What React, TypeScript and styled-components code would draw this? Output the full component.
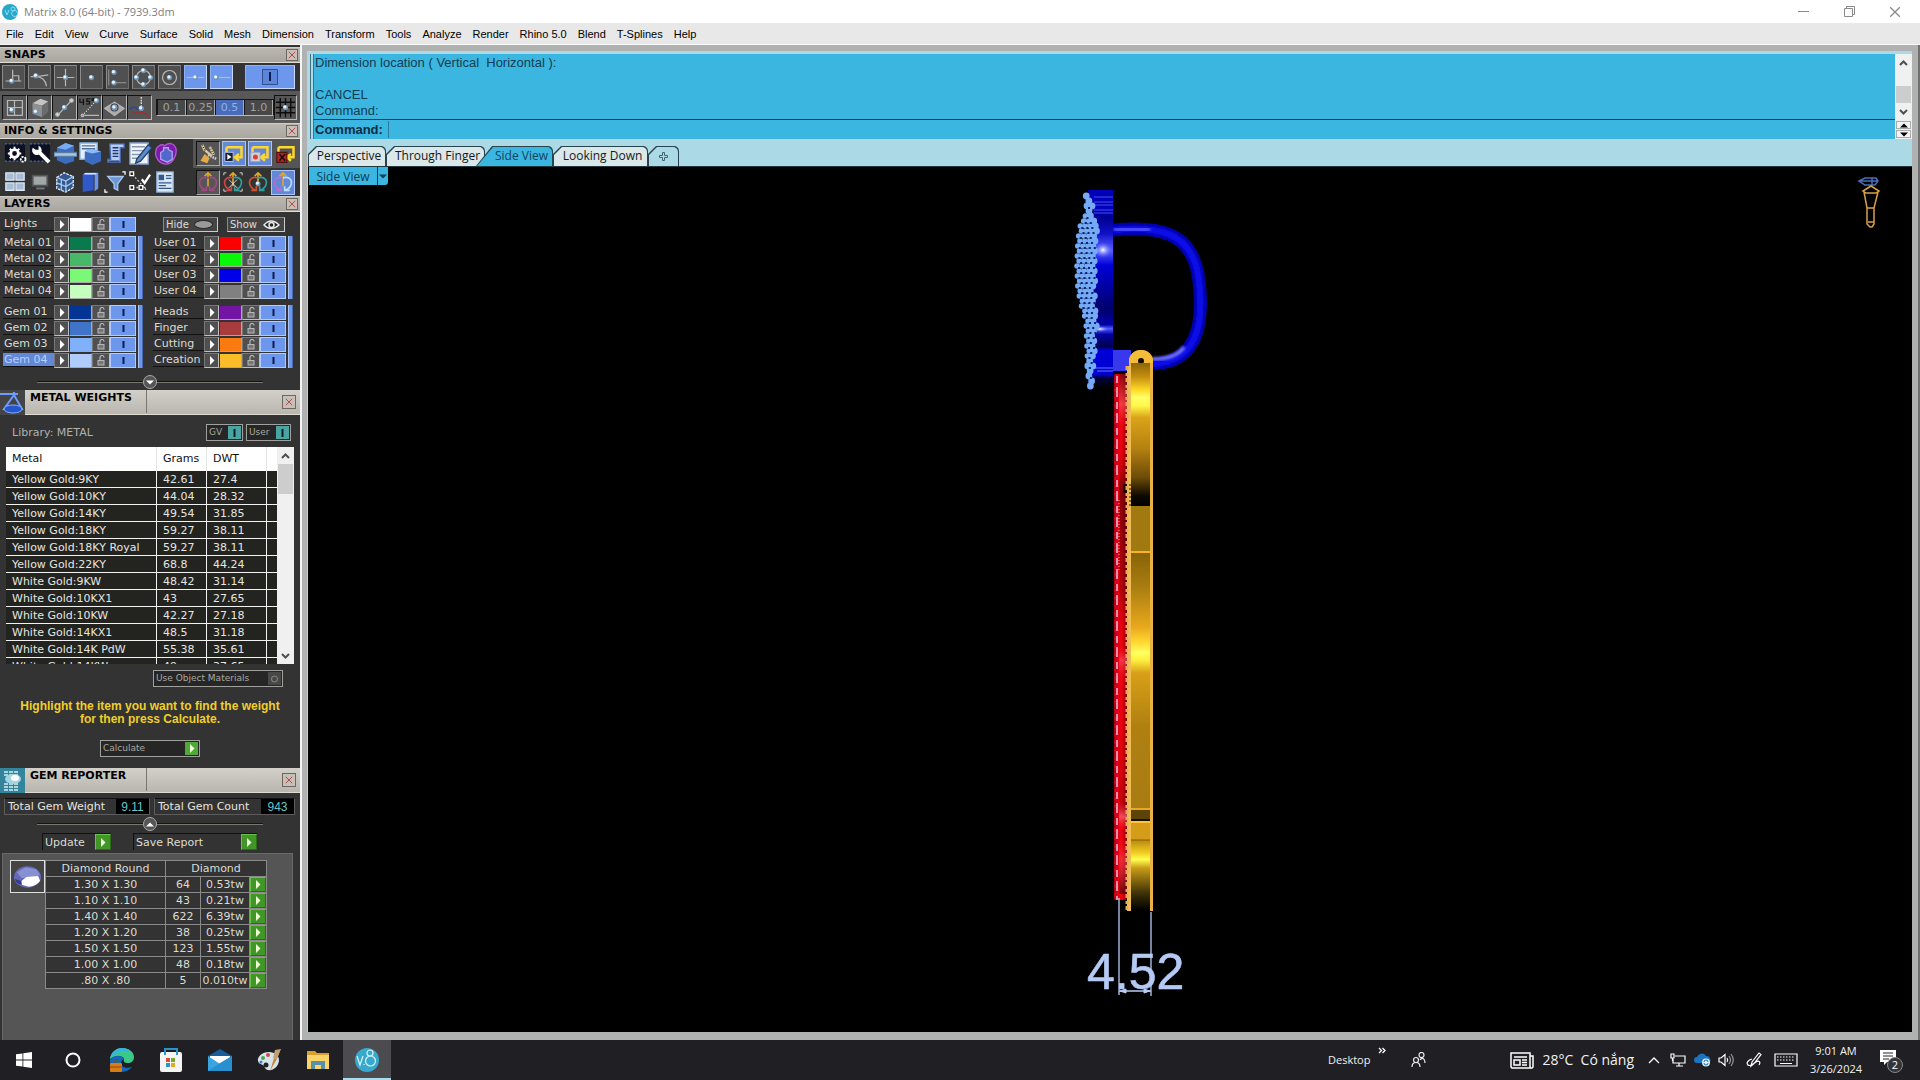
import React from 'react';
import styled, { createGlobalStyle, css } from 'styled-components';

const verdana = '"DejaVu Sans", Verdana, sans-serif';
const arial = '"Liberation Sans", Arial, sans-serif';
const segoe = '"Open Sans", "Segoe UI", sans-serif';

const Global = createGlobalStyle`
  *, *::before, *::after { box-sizing: border-box; }
  body { margin: 0; background: #000; }
  button, input { font: inherit; color: inherit; border: 0; padding: 0; margin: 0; background: none; border-radius: 0; }
  button { display: flex; align-items: center; justify-content: center; }
  svg { display: block; flex: none; }
`;

/* ---------- window ---------- */
const Window = styled.div`
  display: grid;
  grid-template-rows: 23px 22px minmax(0, 1fr) 40px;
  height: 100vh;
  overflow: hidden;
  font-family: ${arial};
`;
const TitleBar = styled.header`
  display: flex;
  align-items: center;
  padding-left: 2px;
  background: #fff;
  color: #808080;
  font: 11px/20px ${segoe};
`;
const TitleText = styled.span`
  flex: 1;
  margin-left: 6px;
`;
const WindowButton = styled.button`
  width: 46px;
  height: 20px;
  color: #8a8a8a;
`;
const WindowButtons = styled.div`
  display: flex;
  padding-right: 2px;
`;
const MenuBar = styled.nav`
  display: flex;
  align-items: center;
  gap: 11px;
  padding-left: 6px;
  background: #e8e8e8;
  border-bottom: 1px solid #fafafa;
`;
const MenuItem = styled.button`
  font: 11px/20px ${arial};
  color: #000;
  white-space: nowrap;
`;
const Body = styled.div`
  display: grid;
  grid-template-columns: 300px minmax(0, 1fr);
  min-height: 0;
`;

/* ---------- side panels ---------- */
const Sidebar = styled.aside`
  display: flex;
  flex-direction: column;
  min-height: 0;
  padding-top: 2px;
  background: #333;
  color: #dcdcd4;
  font: 11px/15px ${verdana};
  overflow: hidden;
`;
const PanelHead = styled.div`
  display: flex;
  flex: none;
  align-items: center;
  justify-content: space-between;
  height: 16px;
  padding: 0 2px 0 4px;
  background: linear-gradient(#b9b7af, #a9a79f);
  border-top: 1px solid #d0cec6;
  border-bottom: 1px solid #e0ded4;
`;
const ToolHead = styled.div`
  display: flex;
  flex: none;
  height: 25px;
  background: linear-gradient(#d2d0c8, #b8b6ae);
  border-bottom: 1px solid #dedcd2;
`;
const ToolTitle = styled.div`
  width: 122px;
  margin: 0 0 1px;
  padding-left: 5px;
  border-right: 1px solid #77756e;
`;
const ToolClose = styled.div`
  display: flex;
  flex: 1;
  align-items: center;
  justify-content: flex-end;
  padding-right: 4px;
`;
const Heading = styled.h2`
  margin: 0;
  color: #000;
  font: bold 11px/16px ${verdana};
  white-space: nowrap;
`;
const CloseButton = styled.button<{ $size: number }>`
  width: ${p => p.$size}px;
  height: ${p => p.$size}px;
  color: #b03a3a;
  background: #c8c0b8;
  border: 1px solid #6d6760;
`;
const ToolRow = styled.div<{ $light?: boolean; $height: number }>`
  display: flex;
  flex: none;
  align-items: center;
  height: ${p => p.$height}px;
  padding: 0 5px 0 2px;
  background: ${p => (p.$light ? '#585858' : '#333')};
`;
const ButtonGroup = styled.div<{ $gap: number }>`
  display: flex;
  align-items: center;
  gap: ${p => p.$gap}px;
`;
const Spacer = styled.div`
  flex: 1;
`;
const SnapButton = styled.button<{ $on?: boolean; $wide?: boolean }>`
  width: ${p => (p.$wide ? 50 : 23)}px;
  height: 24px;
  background: ${p => (p.$on ? '#6d97ec' : '#505050')};
  border: 1px solid;
  border-color: ${p => (p.$on ? '#8eb0f4 #c8d8fa #c8d8fa #8eb0f4' : '#8c8c8c #707070 #707070 #8c8c8c')};
`;
const DarkSnapButton = styled.button`
  width: 25px;
  height: 25px;
  background: #555;
  border: 1px solid;
  border-color: #111 #b8b8b8 #b8b8b8 #111;
`;
const Increments = styled.div`
  display: flex;
  margin-left: 4px;
  border: 1px solid #161616;
  border-bottom-color: #bbb;
`;
const Increment = styled.button<{ $on?: boolean }>`
  width: 29px;
  height: 15px;
  color: ${p => (p.$on ? '#8eb0ec' : '#a0a0a0')};
  background: ${p => (p.$on ? '#4a6cb8' : '#484848')};
  border-right: 1px solid #aaa;
  border-left: 1px solid #161616;
`;
const Settings = styled.div`
  display: grid;
  flex: none;
  grid-template-columns: 193px 107px;
  grid-template-rows: 29px 28px;
`;
const SettingsStrip = styled.div<{ $light?: boolean }>`
  display: flex;
  align-items: center;
  gap: ${p => (p.$light ? 2 : 1)}px;
  padding-left: 3px;
  background: ${p => (p.$light ? '#555' : 'none')};
`;
const SettingButton = styled.button<{ $look?: 'dark' | 'blue' }>`
  width: 24px;
  height: 25px;
  ${p => p.$look === 'dark' && css`background: #555; border: 1px solid; border-color: #111 #aaa #aaa #111;`}
  ${p => p.$look === 'blue' && css`background: #6488d8; border: 1px solid #a8c4f8;`}
`;

/* ---------- layers ---------- */
const LayersBox = styled.div`
  display: grid;
  flex: none;
  grid-template-columns: 141px 142px;
  column-gap: 9px;
  padding: 5px 0 0 3px;
`;
const LightsCell = styled.div`
  height: 19px;
`;
const VisibilityCell = styled.div`
  display: flex;
  gap: 9px;
  height: 19px;
  padding-left: 10px;
`;
const VisibilityButton = styled.button<{ $width: number }>`
  justify-content: space-between;
  width: ${p => p.$width}px;
  height: 15px;
  padding: 0 4px 0 2px;
  background: #444;
  border: 1px solid;
  border-color: #888 #ccc #ccc #888;
  font-size: 10px;
  line-height: 13px;
`;
const LayerGroup = styled.div`
  display: grid;
  grid-template-columns: 134px 5px;
  column-gap: 1px;
  height: 64px;
  margin-bottom: 5px;
`;
const LayerRow = styled.div`
  display: flex;
  height: 16px;
  width: 134px;
`;
const LayerName = styled.span<{ $on?: boolean }>`
  width: 51px;
  height: 14px;
  padding-left: 1px;
  line-height: 13px;
  white-space: nowrap;
  color: ${p => (p.$on ? '#b8d0fa' : '#dcdcd4')};
  background: ${p => (p.$on ? '#6488d8' : 'none')};
  border-bottom: 1px solid #111;
`;
const LayerCell = styled.button<{ $width: number; $fill?: string }>`
  width: ${p => p.$width}px;
  height: 15px;
  background: ${p => p.$fill || '#505050'};
  border: 1px solid;
  border-color: #777 #c0c0c0 #c0c0c0 #777;
`;
const LayerToggle = styled(LayerCell)`
  background: #6d97ec;
  border: 1px solid #b4ccfa;
`;
const Swatch = styled(LayerCell)`
  border-color: #333 #a8a8a8 #a8a8a8 #333;
`;
const GroupBar = styled.button`
  height: 63px;
  background: #6d97ec;
  border-right: 1px solid #4a68b0;
  border-left: 1px solid #a8c4f8;
`;
const Divider = styled.div<{ $height: number }>`
  display: grid;
  flex: none;
  grid-template-columns: 1fr 14px 1fr;
  align-items: center;
  height: ${p => p.$height}px;
  padding: 0 37px;
  &::before, &::after { content: ''; height: 2px; background: #141414; border-bottom: 1px solid #77776f; }
`;
const RoundButton = styled.button`
  width: 14px;
  height: 14px;
  color: #fff;
  background: #555;
  border: 1px solid #aaa;
  border-radius: 50%;
`;

/* ---------- metal weights ---------- */
const LibraryRow = styled.div`
  display: flex;
  flex: none;
  align-items: center;
  gap: 3px;
  height: 17px;
  margin: 9px 9px 6px 12px;
`;
const LibraryName = styled.span`
  flex: 1;
  color: #b0b0b0;
  font-size: 11px;
`;
const BoxedButton = styled.button<{ $width: number }>`
  justify-content: space-between;
  flex: none;
  width: ${p => p.$width}px;
  height: 17px;
  padding: 0 1px 0 2px;
  color: #a8a8a0;
  background: #262626;
  border: 1px solid #a0a09c;
  font: 9px/13px ${verdana};
  white-space: nowrap;
`;
const Chip = styled.span<{ $fill: string }>`
  display: flex;
  align-items: center;
  justify-content: center;
  width: 13px;
  height: 13px;
  background: ${p => p.$fill};
`;
const MetalList = styled.div`
  display: flex;
  flex: none;
  height: 217px;
  margin: 0 6px;
  background: #f0f0f0;
  overflow: hidden;
`;
const MetalTable = styled.table`
  flex: none;
  align-self: flex-start;
  width: 271px;
  table-layout: fixed;
  border-collapse: separate;
  border-spacing: 0;
  color: #e6e6e0;
  th, td { height: 17px; padding: 0 0 0 6px; text-align: left; font-weight: normal; line-height: 16px; white-space: nowrap; }
  th { height: 24px; color: #111; background: #fff; border-right: 1px solid #e4e4e4; }
  td { padding-top: 1px; line-height: 15px; background: #232320; border-right: 1px solid #f2f2f2; border-bottom: 1px solid #f2f2f2; }
  th:last-child, td:last-child { border-right: 0; }
`;
const ScrollBar = styled.div<{ $width: number }>`
  display: flex;
  flex: none;
  flex-direction: column;
  align-items: center;
  width: ${p => p.$width}px;
  background: #f0f0f0;
`;
const ScrollArrow = styled.button`
  width: 100%;
  height: 17px;
  color: #505050;
`;
const ScrollTrack = styled.div<{ $end?: boolean }>`
  display: flex;
  flex: 1;
  flex-direction: column;
  justify-content: ${p => (p.$end ? 'flex-end' : 'flex-start')};
  width: 15px;
`;
const ScrollThumb = styled.div<{ $height: number }>`
  height: ${p => p.$height}px;
  background: #cdcdcd;
`;
const MaterialsRow = styled.div`
  display: flex;
  flex: none;
  justify-content: flex-end;
  margin: 6px 17px 13px;
`;
const Hint = styled.p`
  flex: none;
  margin: 0;
  color: #f0cf28;
  font: bold 12px/13px ${arial};
  text-align: center;
`;
const CalculateRow = styled.div`
  display: flex;
  flex: none;
  justify-content: center;
  margin: 14px 0 11px;
`;

/* ---------- gem reporter ---------- */
const Totals = styled.dl`
  display: flex;
  flex: none;
  gap: 4px;
  height: 17px;
  margin: 5px 5px 0 4px;
`;
const Total = styled.div<{ $label: number }>`
  display: flex;
  flex: none;
  border: 1px solid #5c5c5c;
  border-top-color: #111;
  dt { padding: 0 3px; width: ${p => p.$label}px; color: #e6e6e0; white-space: nowrap; }
  dd { width: 33px; margin: 0; background: #000; color: #68c4cc; font: 12px/16px ${arial}; text-align: center; }
`;
const ReportActions = styled.div`
  display: flex;
  flex: none;
  gap: 22px;
  height: 17px;
  margin: 0 43px 3px 42px;
`;
const ReportButton = styled.button<{ $width: number }>`
  justify-content: space-between;
  width: ${p => p.$width}px;
  padding-left: 2px;
  border-left: 1px solid #111;
  border-top: 1px solid #111;
  white-space: nowrap;
`;
const GreenChip = styled.span`
  display: flex;
  align-items: center;
  justify-content: center;
  width: 16px;
  height: 16px;
  color: #eaffd8;
  background: #429628;
  border: 1px solid;
  border-color: #6cc04c #2a6c18 #2a6c18 #6cc04c;
`;
const ReportPanel = styled.div`
  display: flex;
  flex: 1;
  align-items: flex-start;
  min-height: 0;
  margin: 0 7px 0 2px;
  padding: 6px 0 0 7px;
  background: #555;
  border: 1px solid #686868;
  border-bottom: 0;
`;
const GemThumb = styled.div`
  width: 35px;
  height: 33px;
  border: 1px solid #e0e0e0;
  background: #444;
`;
const GemTable = styled.table`
  width: 221px;
  table-layout: fixed;
  border-collapse: collapse;
  background: #333;
  th, td { height: 16px; padding: 0; border: 1px solid #8a8a8a; font-weight: normal; line-height: 14px; text-align: center; white-space: nowrap; }
`;
const RowButton = styled.button`
  width: 16px;
  height: 15px;
  color: #eaffd8;
  background: #429628;
  border: 1px solid;
  border-color: #6cc04c #2a6c18 #2a6c18 #6cc04c;
`;

/* ---------- workspace ---------- */
const Frame = styled.main`
  display: flex;
  min-width: 0;
  border-left: 2px solid #f4f4f4;
  border-right: 2px solid #707070;
  background: #b0b2b2;
  padding: 6px 6px 8px 5px;
`;
const Workspace = styled.div`
  display: flex;
  flex: 1;
  flex-direction: column;
  min-width: 0;
  padding-top: 3px;
  padding-left: 1px;
  background: #acd9e6;
`;
const CommandArea = styled.section`
  display: grid;
  flex: none;
  grid-template-columns: minmax(0, 1fr) 17px;
  grid-template-rows: 66px 19px;
  margin-left: 2px;
  padding-left: 2px;
  border-left: 1px solid #467080;
  color: #143c52;
  font: 13px/16px ${arial};
`;
const History = styled.div`
  padding: 1px 0 0 1px;
  background: #3bb6e0;
  border-left: 1px solid #467080;
  border-bottom: 1px solid #143c52;
  white-space: pre;
`;
const CommandLine = styled.label`
  display: flex;
  align-items: center;
  padding-left: 1px;
  background: #3bb6e0;
  border-left: 1px solid #467080;
  font-weight: bold;
  color: #0c2c44;
`;
const CommandInput = styled.input`
  flex: 1;
  height: 17px;
  margin-left: 5px;
  border-left: 1px solid #2a7c9c;
  outline: none;
`;
const Spinner = styled.div`
  display: grid;
  grid-template-rows: 1fr 1fr;
  gap: 1px;
  padding: 1px;
  background: #f0f0f0;
`;
const SpinnerButton = styled.button`
  color: #000;
  border: 1px solid #aaa;
  background: #f4f4f4;
`;
const Tabs = styled.div`
  display: flex;
  flex: none;
  align-items: flex-end;
  height: 28px;
  border-bottom: 1px solid #203840;
`;
const Tab = styled.button<{ $width: number; $active?: boolean; $plain?: boolean }>`
  position: relative;
  z-index: 0;
  width: ${p => p.$width}px;
  height: 20px;
  margin-left: ${p => (p.$active ? -9 : 0)}px;
  padding-left: ${p => (p.$plain ? 0 : p.$active ? 14 : 4)}px;
  color: ${p => (p.$active ? '#14455c' : '#181818')};
  font: 12px/18px ${segoe};
  white-space: nowrap;
  &::before, &::after {
    content: '';
    position: absolute;
    z-index: -1;
    inset: 0;
    border-radius: 0 5px 0 0;
    background: #27444e;
    clip-path: ${p => (p.$active ? 'polygon(0 100%, 16px 0, 100% 0, 100% 100%)' : 'polygon(0 100%, 0 8px, 8px 0, 100% 0, 100% 100%)')};
  }
  &::after {
    inset: 1px 1px 0 1px;
    background: ${p => (p.$active ? '#3bb6e0' : p.$plain ? '#acd9e6' : '#dbe8ea')};
  }
`;
const Viewport = styled.section`
  position: relative;
  flex: 1;
  min-height: 0;
  background: #000;
`;
const ViewLabel = styled.div`
  position: absolute;
  top: 0;
  left: 1px;
  display: flex;
  height: 18px;
  color: #123c50;
  background: #3bb6e0;
  border-radius: 0 0 3px 0;
  font: 12px/17px ${segoe};
`;
const ViewName = styled.button`
  width: 69px;
  border-right: 1px solid #143c50;
`;
const ViewMenu = styled.button`
  width: 10px;
`;
const ModelDrawing = styled.svg`
  width: 100%;
  height: 100%;
`;

/* ---------- taskbar ---------- */
const Taskbar = styled.footer`
  display: flex;
  align-items: stretch;
  justify-content: space-between;
  background: #1f1f24;
  color: #f2f2f2;
  font: 11px/20px ${segoe};
`;
const TaskApps = styled.div`
  display: flex;
  gap: 1px;
`;
const TaskButton = styled.button<{ $active?: boolean }>`
  width: 48px;
  background: ${p => (p.$active ? '#4b4b50' : 'none')};
  border-bottom: 2px solid ${p => (p.$active ? '#a8dcf0' : 'transparent')};
  border-top: 2px solid transparent;
`;
const Tray = styled.div`
  display: flex;
  align-items: center;
  padding-right: 8px;
`;
const TrayButton = styled.button<{ $width: number; $align?: 'flex-start' | 'flex-end' }>`
  width: ${p => p.$width}px;
  height: 40px;
  gap: 8px;
  padding-right: ${p => (p.$align === 'flex-end' ? 8 : 0)}px;
  justify-content: ${p => p.$align || 'center'};
  white-space: nowrap;
`;
const Weather = styled.span`
  font-size: 14px;
  white-space: pre;
`;
const Clock = styled.time`
  display: block;
  width: 68px;
  line-height: 18px;
  text-align: center;
`;

/* ---------- icons ---------- */
const Ico = ({ s = 21, children, vb = 24 }: { s?: number; vb?: number; children: React.ReactNode }) => (
  <svg width={s} height={s} viewBox={`0 0 ${vb} ${vb}`} fill="none" stroke="#b8b8b8" strokeWidth="1.4" aria-hidden="true">{children}</svg>
);
const Ball = ({ x, y }: { x: number; y: number }) => (
  <g stroke="none"><circle cx={x} cy={y} r="3" fill="#6c94b4" /><circle cx={x - 0.7} cy={y - 0.7} r="1.9" fill="#e4f4ff" /></g>
);
const Cross = ({ s }: { s: number }) => (
  <svg width={s} height={s} viewBox="0 0 10 10" fill="none" stroke="currentColor" strokeWidth="1.1"><path d="M1 1l8 8M9 1l-8 8" /></svg>
);
const Bar = ({ h = 9, color = '#0c1c50' }: { h?: number; color?: string }) => (
  <svg width="3" height={h} viewBox={`0 0 3 ${h}`}><rect x=".5" width="2" height={h} fill={color} /></svg>
);
const Play = ({ color = 'currentColor' }: { color?: string }) => (
  <svg width="6" height="9" viewBox="0 0 6 9"><path d="M1 0l4.5 4.5L1 9z" fill={color} /></svg>
);
const Tri = ({ up }: { up?: boolean }) => (
  <svg width="8" height="5" viewBox="0 0 8 5"><path d={up ? 'M0 4.500L4 .5l4 4z' : 'M0 .5h8l-4 4z'} fill="currentColor" /></svg>
);
const Chevron = ({ up }: { up?: boolean }) => (
  <svg width="9" height="6" viewBox="0 0 9 6" fill="none" stroke="currentColor" strokeWidth="2"><path d={up ? 'M1 5l3.500-3.500L8 5' : 'M1 1l3.500 3.500L8 1'} /></svg>
);
const Lock = () => (
  <svg width="9" height="11" viewBox="0 0 9 11" fill="none" stroke="#b8b8b8"><path d="M3 5.500V2.500a2 2 0 0 1 4 0" strokeWidth="1.200" /><rect x="1" y="5.500" width="6" height="4.500" fill="#777" /></svg>
);

const snapIcons: [string, React.ReactNode, boolean?][] = [
  ['Perpendicular', <><path d="M3 16h18M11 3v13h7v-6h-7" /><Ball x={10} y={16} /></>],
  ['Tangent', <><path d="M2 11h5c8 0 12 4 13 11M9 11l13-2" /><Ball x={8} y={10} /></>],
  ['Intersection', <><path d="M12 2v20M2 12h20" /><Ball x={12} y={12} /></>],
  ['Point', <Ball x={12} y={12} />],
  ['Knot', <><path d="M6 18h16M2 3v18" strokeWidth=".8" /><Ball x={8} y={6} /><Ball x={8} y={18} /></>],
  ['Quad', <><circle cx="12" cy="12" r="8" /><Ball x={12} y={4} /><Ball x={12} y={20} /><Ball x={4} y={12} /><Ball x={20} y={12} /></>],
  ['Center', <><circle cx="12" cy="12" r="8" /><Ball x={12} y={12} /></>],
  ['Midpoint', <><path d="M2 12h20" /><Ball x={12} y={12} /></>, true],
  ['End', <><path d="M5 12h17" /><Ball x={6} y={12} /></>, true],
];
const planeIcons: [string, React.ReactNode][] = [
  ['Plane', <><path d="M4 4h17v17H4zM12 4v17M4 12h17" /><Ball x={9} y={15} /></>],
  ['Solid', <><path d="M4 7l9-5 9 3-7 5z" fill="#c4c4c4" stroke="none" /><path d="M4 7l11 3v13L4 19z" fill="#909090" stroke="none" /><path d="M15 10l7-5v12l-7 6z" fill="#6c6c6c" stroke="none" /><Ball x={8} y={17} /></>],
  ['Line', <><path d="M4 21L20 4" /><Ball x={12} y={12} /><circle cx="20" cy="4" r="2" fill="#ddd" /><circle cx="4" cy="20" r="2" fill="#ddd" /></>],
];
const constraintIcons: [string, React.ReactNode][] = [
  ['45 degrees', <><path d="M4 21L19 5" strokeDasharray="1 2" stroke="#eee" /><path d="M1 2v4h5M5 2v7M13 2H9v3h3v3H8M15 2h2v2h-2z" stroke="#111" /><path d="M6 21h17" /><circle cx="4" cy="21" r="1.500" /><Ball x={20} y={4} /></>],
  ['Project', <><path d="M1 13l11-7 11 7-11 8z" fill="#aaa" /><circle cx="12" cy="12" r="4" stroke="#445" /><Ball x={12} y={12} /></>],
  ['Planar', <><path d="M14 0v10" strokeDasharray="2 1" stroke="#eee" /><path d="M1 14c7-7 8 3 13 0" stroke="#2a4c94" strokeWidth="2" /><path d="M3 17c7 4 14-4 20 6" stroke="#a03030" strokeWidth="2" strokeDasharray="3 1" /><Ball x={14} y={13} /></>],
];
const gear = <><circle cx="11" cy="12" r="4" stroke="#fff" strokeWidth="3" /><path d="M11 5v3M11 16v3M4 12h3M15 12h3M6 7l2 2M16 7l-2 2M6 17l2-2" stroke="#fff" strokeWidth="2" /><circle cx="20" cy="18" r="2.500" stroke="#fff" strokeWidth="2" strokeDasharray="2 1" /></>;
const screen = <><rect x="1" y="2" width="21" height="18" fill="#0c1020" stroke="none" /><path d="M1 2h21M1 20h21" stroke="#5070a8" strokeDasharray="2 2" /></>;
const infoTop: [string, React.ReactNode][] = [
  ['Settings', <>{screen}{gear}</>],
  ['Tools', <>{screen}<path d="M10 10l11 11" stroke="#fff" strokeWidth="4" /><path d="M4 6a5 5 0 1 0 6-2v4H7z" fill="#fff" stroke="none" /></>],
  ['Section', <><path d="M3 6l9-5 9 3v16l-9 3-9-4z" fill="#3c6cc0" stroke="none" /><path d="M3 6l9 2 9-4-9-3z" fill="#78acf0" stroke="none" /><path d="M0 11h24v4H0z" fill="#a8c8e8" stroke="#5c7ca0" /></>],
  ['Notes', <><path d="M1 1h18v17H1z" fill="#e4f0ff" stroke="#85b0e0" /><path d="M3 4h14M3 7h14" stroke="#4c6c9c" /><path d="M6 10l7-3 10 3v10l-9 4-8-4z" fill="#3c6cc0" stroke="none" /><path d="M6 10l8 2 9-2-10-3z" fill="#8cbcf8" stroke="none" /></>],
  ['Script', <><path d="M6 2h15v4h-4v15H4v-3h3z" fill="#b8ccf0" stroke="#4468b0" /><path d="M9 6h6M9 9h6M9 12h6M9 15h6M5 20h11" stroke="#1c3474" /></>],
  ['Edit', <><path d="M1 1h19v22H1z" fill="#eef4fa" stroke="#88a8cc" /><path d="M3 5h14M3 9h14M3 13h10M3 17h8" stroke="#8898ac" /><path d="M8 18L20 3l4 3-12 14-5 2z" fill="#5c8ccc" stroke="#24406c" /></>],
  ['Material', <><path d="M2 9c0-4 6-8 9-5 4-4 10-3 12 3 1 6-3 15-9 16-7 1-14-6-12-14z" fill="#7c1ca8" stroke="#b058d0" /><path d="M7 11l3-2V6h5v2l4 2v8l-5 3-7-3z" fill="#5068cc" stroke="#b49cf0" /></>],
];
const infoBottom: [string, React.ReactNode][] = [
  ['Viewports', <path d="M2 2h9v8H2zM13 2h9v8h-9zM2 13h9v8H2zM13 13h9v8h-9z" fill="#a8bcd8" stroke="#dce8f4" />],
  ['Display', <><path d="M4 5h16v11H4z" fill="#a0a8a8" stroke="#555" strokeWidth="2" /><path d="M8 19h9" stroke="#777" strokeWidth="2" /></>],
  ['Wireframe', <><path d="M3 7l8-5 10 4v12l-8 5-10-4z" fill="#34588c" stroke="#e0ecfa" strokeDasharray="3 1" /><path d="M3 7l10 4 8-5M13 11v12M3 13l10 4 8-5M8 9v12" stroke="#a8ccf4" /></>],
  ['Library', <><path d="M4 4l12-2v19l-12 2z" fill="#3058c8" stroke="none" /><path d="M4 4l3-2h14v17l-4 3V4z" fill="#6c94ec" stroke="none" /><path d="M6 3h13" stroke="#e0ecff" /></>],
  ['Filter', <><path d="M4 6h17l-6 8v7l-4-2v-5z" fill="#6c98d8" stroke="#a8c8f0" /><path d="M20 1h3v3M1 20v3h3" stroke="#fff" /></>],
  ['Points', <><path d="M4 4l16 18M4 18h16" stroke="#ccc" strokeDasharray="2 2" /><path d="M14 9l3 4 6-9" stroke="#fff" strokeWidth="2.500" /><path d="M1 1h4v4H1zM1 16h4v4H1zM11 16h4v4h-4z" stroke="#fff" fill="#222" /></>],
  ['Report', <><path d="M3 1h18v22H3z" fill="#d8e8f8" stroke="#88a8cc" /><path d="M5 4h6v6H5z" fill="#34588c" stroke="none" /><path d="M13 5h6M13 8h6M5 13h14M5 16h8M5 19h14" stroke="#34588c" /></>],
];
const loopArrow = <path d="M3 4h18v12h-6M18 12l-5 4 5 4M3 4v6" stroke="#ffd62c" strokeWidth="3" />;
const filterTop: [string, React.ReactNode, ('dark' | 'blue')?][] = [
  ['Clean', <><path d="M5 1l3 7M9 8l7 6M14 3l5 10" stroke="#d8c8a0" strokeWidth="3" /><path d="M5 1l3 7M14 3l5 10" stroke="#222" strokeDasharray="1 2" /><path d="M3 20l5-8 6 5-3 6z" fill="#e8a848" stroke="none" /><path d="M12 13l10 5" stroke="#ccc" strokeWidth="3" strokeDasharray="2 1" /></>, 'dark'],
  ['Run', <>{loopArrow}<path d="M1 10h10v11H1z" fill="#182030" stroke="#c8d8f8" strokeWidth="1" /><path d="M4 12l5 3.500-5 3.500z" fill="#fff" stroke="none" /></>, 'blue'],
  ['Record', <>{loopArrow}<path d="M1 10h11v11H1z" fill="#d8d0d0" stroke="#a0a8c0" strokeWidth="1" /><circle cx="6.500" cy="15.500" r="3" fill="#d84040" stroke="none" /></>, 'blue'],
  ['Stop', <>{loopArrow}<path d="M1 10h12v12H1z" fill="#c02020" stroke="#501010" /><path d="M4 12l7 8M11 12l-7 8" stroke="#111" strokeWidth="2" /></>],
];
const gumball = (a: string, b: string) => (
  <><path d="M12 1v16M8 5l4-4 4 4" stroke="#d8a830" strokeWidth="2" /><path d="M12 7C-1 4-1 17 9 22M4 22h6v-5" stroke={a} strokeWidth="2" /><path d="M12 7c13-3 13 10 3 15M20 22h-6v-5" stroke={b} strokeWidth="2" /></>
);
const filterBottom: [string, React.ReactNode, ('dark' | 'blue')?][] = [
  ['Gumball', gumball('#a04880', '#a04880'), 'dark'],
  ['Gumball scale', <>{gumball('#d04848', '#30a0a0')}<path d="M1 4V1h3M20 1h3v3M1 20v3h3M20 23h3v-3M7 9l10 10M17 9L7 19" stroke="#eee" strokeWidth="1" /></>],
  ['Gumball align', <>{gumball('#d05030', '#30a0a0')}<Ball x={12} y={14} /></>],
  ['Gumball move', gumball('#b070d0', '#b8e0ff'), 'blue'],
];

/* ---------- data ---------- */
const menus = ['File', 'Edit', 'View', 'Curve', 'Surface', 'Solid', 'Mesh', 'Dimension', 'Transform', 'Tools', 'Analyze', 'Render', 'Rhino 5.0', 'Blend', 'T-Splines', 'Help'];
const layerGroups = [
  [['Metal 01', '#087a4c'], ['Metal 02', '#48b868'], ['Metal 03', '#7cf878'], ['Metal 04', '#c4ffc0']],
  [['User 01', '#fa0000'], ['User 02', '#08f808'], ['User 03', '#0000e8'], ['User 04', '#808080']],
  [['Gem 01', '#043494'], ['Gem 02', '#4074c8'], ['Gem 03', '#80b0fa'], ['Gem 04', '#b0ccfc']],
  [['Heads', '#7414a4'], ['Finger', '#a83c3c'], ['Cutting', '#fa7c10'], ['Creation', '#fabc28']],
];
const metals = [
  ['Yellow Gold:9KY', '42.61', '27.4'], ['Yellow Gold:10KY', '44.04', '28.32'], ['Yellow Gold:14KY', '49.54', '31.85'],
  ['Yellow Gold:18KY', '59.27', '38.11'], ['Yellow Gold:18KY Royal', '59.27', '38.11'], ['Yellow Gold:22KY', '68.8', '44.24'],
  ['White Gold:9KW', '48.42', '31.14'], ['White Gold:10KX1', '43', '27.65'], ['White Gold:10KW', '42.27', '27.18'],
  ['White Gold:14KX1', '48.5', '31.18'], ['White Gold:14K PdW', '55.38', '35.61'], ['White Gold:14KW', '49', '37.65'],
];
const gems = [
  ['1.30 X 1.30', '64', '0.53tw'], ['1.10 X 1.10', '43', '0.21tw'], ['1.40 X 1.40', '622', '6.39tw'], ['1.20 X 1.20', '38', '0.25tw'],
  ['1.50 X 1.50', '123', '1.55tw'], ['1.00 X 1.00', '48', '0.18tw'], ['.80 X .80', '5', '0.010tw'],
];

/* ---------- parts ---------- */
const Layer = ({ name, color }: { name: string; color: string }) => (
  <LayerRow>
    <LayerName $on={name === 'Gem 04'}>{name}</LayerName>
    <LayerCell $width={15} aria-label={`${name} menu`}><Play color="#fff" /></LayerCell>
    <Swatch $width={23} $fill={color} aria-label={`${name} color`} />
    <LayerCell $width={18} aria-label={`${name} lock`}><Lock /></LayerCell>
    <LayerToggle $width={26} aria-label={`${name} visible`}><Bar h={7} /></LayerToggle>
  </LayerRow>
);

/* outline of the pavé cluster, top to bottom: [y, left, right] */
const profile = [[194, 1085, 1087], [202, 1086, 1092], [214, 1086, 1092], [222, 1080, 1097], [240, 1077, 1096], [265, 1076, 1096], [290, 1077, 1095], [308, 1081, 1096], [320, 1085, 1097], [345, 1086, 1096], [370, 1087, 1093], [397, 1091, 1091]];
const edgesAt = (y: number) => {
  const i = Math.max(1, profile.findIndex(p => p[0] >= y));
  const a = profile[i - 1];
  const b = profile[i];
  const t = (y - a[0]) / (b[0] - a[0]);
  return [a[1] + (b[1] - a[1]) * t, a[2] + (b[2] - a[2]) * t];
};
const stones: React.ReactNode[] = [];
const gaps: React.ReactNode[] = [];
for (let y = 196, row = 0; y <= 396; y += 5, row++) {
  const [l, r] = edgesAt(y);
  for (let x = l + 1 + (row % 2) * 2, c = 0; x <= r; x += 5, c++) {
    stones.push(<circle key={`${y}-${x}`} cx={x} cy={y} r={r - x < 6 ? 3.4 : 2.8} fill="#74aaf6" />);
    if (x + 3 < r) gaps.push(<rect key={`${y}-${x}`} x={x + 1} y={y + 1} width="2" height="2" fill="#0c2470" />);
  }
}

const Model = () => (
  <ModelDrawing viewBox="308 167 1604 865" role="img" aria-label="Side view of pendant, 4.52 wide">
    <defs>
      <linearGradient id="body" x1="0" x2="0" y1="190" y2="388" gradientUnits="userSpaceOnUse">
        <stop offset="0" stopColor="#0000b8" /><stop offset=".1" stopColor="#0000c0" /><stop offset=".14" stopColor="#000090" />
        <stop offset=".22" stopColor="#1010c8" /><stop offset=".305" stopColor="#5860ff" /><stop offset=".38" stopColor="#0000d8" /><stop offset=".6" stopColor="#00006c" />
        <stop offset=".68" stopColor="#0000a8" /><stop offset=".7" stopColor="#5058ff" /><stop offset=".73" stopColor="#0000a0" />
        <stop offset=".79" stopColor="#000050" /><stop offset=".81" stopColor="#0000d8" /><stop offset=".93" stopColor="#0000d0" />
        <stop offset=".95" stopColor="#00003c" /><stop offset="1" stopColor="#000" />
      </linearGradient>
      <radialGradient id="glint"><stop offset="0" stopColor="#fff" /><stop offset="1" stopColor="#5060ff" stopOpacity="0" /></radialGradient>
      <linearGradient id="g1" x1="0" x2="0" y1="363" y2="506" gradientUnits="userSpaceOnUse">
        <stop offset="0" stopColor="#8c6408" /><stop offset=".1" stopColor="#c89010" /><stop offset=".19" stopColor="#ffdc28" />
        <stop offset=".24" stopColor="#ffff68" /><stop offset=".3" stopColor="#fff848" /><stop offset=".38" stopColor="#dca418" /><stop offset=".6" stopColor="#b48010" />
        <stop offset=".8" stopColor="#6c4c08" /><stop offset=".93" stopColor="#0c0900" /><stop offset="1" stopColor="#000" />
      </linearGradient>
      <linearGradient id="g2" x1="0" x2="0" y1="553" y2="808" gradientUnits="userSpaceOnUse">
        <stop offset="0" stopColor="#886408" /><stop offset=".13" stopColor="#a87c10" /><stop offset=".29" stopColor="#e8a81c" />
        <stop offset=".35" stopColor="#ffd830" /><stop offset=".39" stopColor="#ffff60" /><stop offset=".42" stopColor="#fff040" />
        <stop offset=".47" stopColor="#d8a018" /><stop offset=".68" stopColor="#b08010" /><stop offset="1" stopColor="#a87c14" />
      </linearGradient>
      <linearGradient id="g3" x1="0" x2="0" y1="840" y2="910" gradientUnits="userSpaceOnUse">
        <stop offset="0" stopColor="#b88810" /><stop offset=".18" stopColor="#f0cc20" /><stop offset=".28" stopColor="#ffff50" />
        <stop offset=".4" stopColor="#c89c18" /><stop offset=".75" stopColor="#403408" /><stop offset="1" stopColor="#000" />
      </linearGradient>
      <linearGradient id="red" x1="0" x2="1"><stop offset="0" stopColor="#d00018" /><stop offset=".6" stopColor="#f00010" /><stop offset="1" stopColor="#800010" /></linearGradient>
      <linearGradient id="redShade" x1="0" x2="0" y1="373" y2="895" gradientUnits="userSpaceOnUse">
        <stop offset="0" stopColor="#300" stopOpacity=".5" /><stop offset=".06" stopColor="#ff7070" stopOpacity=".5" /><stop offset=".12" stopColor="#f00" stopOpacity="0" />
        <stop offset=".22" stopColor="#200" stopOpacity=".5" /><stop offset=".42" stopColor="#300" stopOpacity=".3" /><stop offset=".52" stopColor="#f00" stopOpacity="0" />
        <stop offset=".55" stopColor="#ff7080" stopOpacity=".5" /><stop offset=".6" stopColor="#f00" stopOpacity="0" /><stop offset=".82" stopColor="#600" stopOpacity=".3" />
        <stop offset=".85" stopColor="#ff8090" stopOpacity=".6" /><stop offset=".88" stopColor="#f00" stopOpacity="0" /><stop offset=".93" stopColor="#f66" stopOpacity=".4" /><stop offset="1" stopColor="#200" stopOpacity=".6" />
      </linearGradient>
      <filter id="soft"><feGaussianBlur stdDeviation="1.500" /></filter>
    </defs>

    <g fill="none">
      <path d="M1113 230C1160 226 1190 232 1198 274C1202 300 1202 328 1190 346C1180 360 1166 363 1152 364" stroke="#0000a4" strokeWidth="13" />
      <path d="M1113 230C1160 226 1190 232 1198 274C1202 300 1202 328 1190 346C1180 360 1166 363 1152 364" stroke="#0808ec" strokeWidth="7" filter="url(#soft)" />
      <path d="M1114 230C1126 229 1138 228 1150 230" stroke="#4c4cff" strokeWidth="6" filter="url(#soft)" />
      <path d="M1152 359C1166 359 1178 356 1184 347" stroke="#9c9cff" strokeWidth="3" filter="url(#soft)" />
    </g>
    <path d="M1088 190h25v198h-14q-8-8-9-20l4-150z" fill="url(#body)" />
    <path d="M1094 197h19M1094 202h19M1094 205h19M1094 210h19M1094 213h19" stroke="#4450e4" />
    <ellipse cx="1103" cy="250" rx="9" ry="8" fill="url(#glint)" />
    <ellipse cx="1100" cy="329" rx="9" ry="3" fill="url(#glint)" />
    <path d="M1095 368h18M1097 371h16" stroke="#6878ff" />
    <rect x="1113" y="350" width="18" height="21" fill="#3838ec" />
    {stones}
    {gaps}

    <rect x="1114" y="374" width="13" height="526" rx="2" fill="url(#red)" />
    <rect x="1119" y="374" width="9" height="520" fill="url(#redShade)" />
    <path d="M1115 376v522" stroke="#900018" strokeDasharray="5 3" />
    <path d="M1117 376v524" stroke="#dc94ac" strokeWidth="2" strokeDasharray="7 4 10 5" />
    <path d="M1119 500v70" stroke="#f8b8c8" strokeDasharray="1 2" />
    <path d="M1123 484h4v9h-4z" fill="#200" />

    <path d="M1129 910V361a12 11 0 0 1 24 0V911h-3V363h-19V911z" fill="#eab040" />
    <path d="M1129 363v-2a12 11 0 0 1 24 0v2z" fill="#f4bc38" />
    <circle cx="1141" cy="361" r="3" fill="#100c00" />
    <rect x="1131" y="363" width="19" height="143" fill="url(#g1)" />
    <rect x="1131" y="506" width="19" height="45" fill="#a07a10" />
    <rect x="1131" y="551" width="19" height="2" fill="#f8b420" />
    <rect x="1131" y="553" width="19" height="255" fill="url(#g2)" />
    <rect x="1131" y="808" width="19" height="2" fill="#e8a820" />
    <rect x="1131" y="810" width="19" height="12" fill="#5c4408" />
    <path d="M1131 820h19" stroke="#181000" strokeWidth="2" />
    <rect x="1131" y="822" width="19" height="18" fill="#d49c18" />
    <rect x="1131" y="840" width="19" height="72" fill="url(#g3)" />
    <path d="M1131 822h19" stroke="#ffc438" strokeWidth="2" />
    <path d="M1131 840h19" stroke="#806008" />
    <path d="M1129 366V911" stroke="#f0bc58" strokeWidth="4" />
    <path d="M1127 366V911" stroke="#e8ac50" strokeWidth="3" strokeDasharray="4 3 3 2" />
    <path d="M1130 484v24" stroke="#181000" strokeDasharray="2 2" />

    <g stroke="#b8ccf4" fill="none">
      <path d="M1119 898v97M1151 912v84M1119 991h32" strokeWidth="1.300" />
      <path d="M1120 991l6-2v4zM1150 991l-6-2v4z" fill="#b8ccf4" />
    </g>
    <text x="1087" y="989" fill="#b4caf4" stroke="#b4caf4" strokeWidth=".6" fontFamily="Liberation Sans, Arial, sans-serif" fontSize="50">4.52</text>

    <g fill="none" strokeWidth="1.500">
      <path d="M1859 181l6-3h11l2 3-3 4h-10zM1859 181h19M1872 178v8" stroke="#4c6cb8" />
      <path d="M1863 191l8-5 8 5-3 2h-10zM1864 192l3 16h7l4-16M1867 208v16l3 3h2l2-3v-16M1868 222h6" stroke="#d8a048" />
    </g>
  </ModelDrawing>
);

export default function App() {
  return (
    <>
      <Global />
      <Window>
        <TitleBar>
          <svg width="16" height="16" viewBox="0 0 16 16"><circle cx="8" cy="8" r="8" fill="#28a8c8" /><path d="M3 6l2 5 2-5M11 7a2 2 0 1 1 0-4 2 2 0 0 1 0 4 3 3 0 1 1 0 5 3 3 0 0 1 0-5" fill="none" stroke="#8cdcf0" /></svg>
          <TitleText>Matrix 8.0 (64-bit) - 7939.3dm</TitleText>
          <WindowButtons>
            <WindowButton aria-label="Minimize"><svg width="11" height="11" viewBox="0 0 11 11" stroke="currentColor"><path d="M0 5.500h11" /></svg></WindowButton>
            <WindowButton aria-label="Restore"><svg width="11" height="11" viewBox="0 0 11 11" fill="none" stroke="currentColor"><path d="M.5 2.500h8v8h-8zM2.500 2.500v-2h8v8h-2" /></svg></WindowButton>
            <WindowButton aria-label="Close"><Cross s={12} /></WindowButton>
          </WindowButtons>
        </TitleBar>
        <MenuBar>{menus.map(m => <MenuItem key={m}>{m}</MenuItem>)}</MenuBar>

        <Body>
          <Sidebar>
            <PanelHead><Heading>SNAPS</Heading><CloseButton $size={12} aria-label="Close Snaps"><Cross s={8} /></CloseButton></PanelHead>
            <ToolRow $height={28}>
              <ButtonGroup $gap={3}>
                {snapIcons.map(([n, i, on]) => <SnapButton key={n} $on={on} aria-label={n}><Ico>{i}</Ico></SnapButton>)}
              </ButtonGroup>
              <Spacer />
              <SnapButton $on $wide aria-label="Snaps on"><svg width="16" height="16" viewBox="0 0 16 16"><path d="M.5 15.500V.5h15v15z" fill="#5c84d8" stroke="#34508c" /><rect x="7" y="3" width="2" height="9" fill="#0c1c50" /></svg></SnapButton>
            </ToolRow>
            <ToolRow $height={32} $light>
              <ButtonGroup $gap={0}>{planeIcons.map(([n, i]) => <DarkSnapButton key={n} aria-label={n}><Ico>{i}</Ico></DarkSnapButton>)}</ButtonGroup>
              <Spacer />
              <ButtonGroup $gap={0}>{constraintIcons.map(([n, i]) => <DarkSnapButton key={n} aria-label={n}><Ico>{i}</Ico></DarkSnapButton>)}</ButtonGroup>
              <Increments>
                {['0.1', '0.25', '0.5', '1.0'].map(v => <Increment key={v} $on={v === '0.5'}>{v}</Increment>)}
              </Increments>
              <DarkSnapButton aria-label="Grid snap"><Ico><path d="M6 1v22M12 1v22M18 1v22M1 6h22M1 12h22M1 18h22" stroke="#0c0c0c" strokeWidth="1.600" /><Ball x={12} y={12} /></Ico></DarkSnapButton>
            </ToolRow>

            <PanelHead><Heading>INFO &amp; SETTINGS</Heading><CloseButton $size={12} aria-label="Close Info"><Cross s={8} /></CloseButton></PanelHead>
            <Settings>
              <SettingsStrip>{infoTop.map(([n, i]) => <SettingButton key={n} aria-label={n}><Ico s={23}>{i}</Ico></SettingButton>)}</SettingsStrip>
              <SettingsStrip $light>{filterTop.map(([n, i, l]) => <SettingButton key={n} $look={l} aria-label={n}><Ico s={20}>{i}</Ico></SettingButton>)}</SettingsStrip>
              <SettingsStrip>{infoBottom.map(([n, i]) => <SettingButton key={n} aria-label={n}><Ico s={22}>{i}</Ico></SettingButton>)}</SettingsStrip>
              <SettingsStrip>{filterBottom.map(([n, i, l]) => <SettingButton key={n} $look={l} aria-label={n}><Ico s={20}>{i}</Ico></SettingButton>)}</SettingsStrip>
            </Settings>

            <PanelHead><Heading>LAYERS</Heading><CloseButton $size={12} aria-label="Close Layers"><Cross s={8} /></CloseButton></PanelHead>
            <LayersBox>
              <LightsCell><Layer name="Lights" color="#ffffff" /></LightsCell>
              <VisibilityCell>
                <VisibilityButton $width={55}>Hide<svg width="19" height="9" viewBox="0 0 19 9"><ellipse cx="9.500" cy="4.500" rx="9" ry="4" fill="#999" stroke="#222" /></svg></VisibilityButton>
                <VisibilityButton $width={58}>Show<svg width="17" height="10" viewBox="0 0 17 10" fill="none" stroke="#e8e8e8" strokeWidth="1.500"><path d="M1 5q7-8 15 0-8 7-15 0z" fill="#222" /><circle cx="8.500" cy="5" r="2.500" /></svg></VisibilityButton>
              </VisibilityCell>
              {layerGroups.map((g, i) => (
                <LayerGroup key={i}>
                  <div>{g.map(([n, c]) => <Layer key={n} name={n} color={c} />)}</div>
                  <GroupBar aria-label="Toggle group" />
                </LayerGroup>
              ))}
            </LayersBox>
            <Divider $height={16}><RoundButton aria-label="More layers"><Tri /></RoundButton></Divider>

            <ToolHead>
              <svg width="25" height="25" viewBox="0 0 25 25"><rect width="25" height="25" fill="#444" /><path d="M0 4h18M14 2v4M14 5L4 19h18z" fill="none" stroke="#6c9cff" strokeWidth="2" /><ellipse cx="13" cy="19" rx="9" ry="4" fill="#2454d0" stroke="#84b4ff" /></svg>
              <ToolTitle><Heading>METAL WEIGHTS</Heading></ToolTitle>
              <ToolClose><CloseButton $size={14} aria-label="Close Metal Weights"><Cross s={8} /></CloseButton></ToolClose>
            </ToolHead>
            <LibraryRow>
              <LibraryName>Library: METAL</LibraryName>
              <BoxedButton $width={37}>GV<Chip $fill="#4aa4a4"><Bar h={8} color="#101c20" /></Chip></BoxedButton>
              <BoxedButton $width={45}>User<Chip $fill="#4aa4a4"><Bar h={8} color="#101c20" /></Chip></BoxedButton>
            </LibraryRow>
            <MetalList>
              <MetalTable>
                <colgroup><col style={{ width: 151 }} /><col style={{ width: 50 }} /><col style={{ width: 60 }} /><col /></colgroup>
                <thead><tr><th>Metal</th><th>Grams</th><th>DWT</th><th /></tr></thead>
                <tbody>{metals.map(m => <tr key={m[0]}><td>{m[0]}</td><td>{m[1]}</td><td>{m[2]}</td><td /></tr>)}</tbody>
              </MetalTable>
              <ScrollBar $width={17}>
                <ScrollArrow aria-label="Scroll up"><Chevron up /></ScrollArrow>
                <ScrollTrack><ScrollThumb $height={30} /></ScrollTrack>
                <ScrollArrow aria-label="Scroll down"><Chevron /></ScrollArrow>
              </ScrollBar>
            </MetalList>
            <MaterialsRow>
              <BoxedButton $width={130}>Use Object Materials<Chip $fill="#484848"><svg width="7" height="8" viewBox="0 0 7 8"><circle cx="3.500" cy="4" r="3" fill="none" stroke="#888" /></svg></Chip></BoxedButton>
            </MaterialsRow>
            <Hint>Highlight the item you want to find the weight<br />for then press Calculate.</Hint>
            <CalculateRow><BoxedButton $width={100}>Calculate<Chip $fill="#50a838"><Play color="#eaffd8" /></Chip></BoxedButton></CalculateRow>

            <ToolHead>
              <svg width="25" height="25" viewBox="0 0 25 25"><rect width="25" height="25" fill="#34849c" /><path d="M4 4h14M4 7h14M4 16h14M4 19h14M4 22h14" stroke="#d4f0f4" strokeWidth="1.500" strokeDasharray="4 1" /><ellipse cx="13" cy="11" rx="8" ry="5" fill="#a4d4e0" /><ellipse cx="15" cy="10" rx="4" ry="3" fill="#fff" /></svg>
              <ToolTitle><Heading>GEM REPORTER</Heading></ToolTitle>
              <ToolClose><CloseButton $size={14} aria-label="Close Gem Reporter"><Cross s={8} /></CloseButton></ToolClose>
            </ToolHead>
            <Totals>
              <Total $label={111}><dt>Total Gem Weight</dt><dd>9.11</dd></Total>
              <Total $label={106}><dt>Total Gem Count</dt><dd>943</dd></Total>
            </Totals>
            <Divider $height={18}><RoundButton aria-label="Collapse"><Tri up /></RoundButton></Divider>
            <ReportActions>
              <ReportButton $width={69}>Update<GreenChip><Play /></GreenChip></ReportButton>
              <ReportButton $width={124}>Save Report<GreenChip><Play /></GreenChip></ReportButton>
            </ReportActions>
            <ReportPanel>
              <GemThumb><svg width="33" height="31" viewBox="0 0 34 31"><ellipse cx="17" cy="16" rx="14" ry="11" fill="#6468b8" /><path d="M6 11l9-5 11 2 4 6-9 3-10 0z" fill="#8890d4" /><path d="M11 20l5-4 12-1 2 5q-4 6-12 6l-7-2z" fill="#fff" /><path d="M4 18l6 2 1 4q-6-1-7-6" fill="#343c88" /></svg></GemThumb>
              <GemTable>
                <colgroup><col style={{ width: 120 }} /><col style={{ width: 35 }} /><col style={{ width: 49 }} /><col style={{ width: 17 }} /></colgroup>
                <thead><tr><th>Diamond Round</th><th colSpan={3}>Diamond</th></tr></thead>
                <tbody>{gems.map(g => <tr key={g[0]}><td>{g[0]}</td><td>{g[1]}</td><td>{g[2]}</td><td><RowButton aria-label={`Show ${g[0]}`}><Play /></RowButton></td></tr>)}</tbody>
              </GemTable>
            </ReportPanel>
          </Sidebar>

          <Frame>
            <Workspace>
              <CommandArea>
                <History>{'Dimension location ( Vertical  Horizontal ):\n\nCANCEL\nCommand:'}</History>
                <ScrollBar $width={17}>
                  <ScrollArrow aria-label="Scroll up"><Chevron up /></ScrollArrow>
                  <ScrollTrack $end><ScrollThumb $height={17} /></ScrollTrack>
                  <ScrollArrow aria-label="Scroll down"><Chevron /></ScrollArrow>
                </ScrollBar>
                <CommandLine>Command:<CommandInput type="text" /></CommandLine>
                <Spinner>
                  <SpinnerButton aria-label="Previous"><Tri up /></SpinnerButton>
                  <SpinnerButton aria-label="Next"><Tri /></SpinnerButton>
                </Spinner>
              </CommandArea>
              <Tabs>
                <Tab $width={78}>Perspective</Tab>
                <Tab $width={99}>Through Finger</Tab>
                <Tab $width={77} $active>Side View</Tab>
                <Tab $width={95}>Looking Down</Tab>
                <Tab $width={31} $plain aria-label="New view"><svg width="9" height="9" viewBox="0 0 9 9"><path d="M3.500.5h2v3h3v2h-3v3h-2v-3h-3v-2h3z" fill="none" stroke="#446470" /></svg></Tab>
              </Tabs>
              <Viewport>
                <Model />
                <ViewLabel><ViewName>Side View</ViewName><ViewMenu aria-label="View menu"><Tri /></ViewMenu></ViewLabel>
              </Viewport>
            </Workspace>
          </Frame>
        </Body>

        <Taskbar>
          <TaskApps>
            <TaskButton aria-label="Start"><svg width="16" height="16" viewBox="0 0 16 16" fill="#fff"><path d="M0 2.300l6.500-.9v6.200H0zM7.300 1.300L16 0v7.600H7.300zM0 8.400h6.500v6.200L0 13.700zM7.300 8.400H16V16l-8.700-1.200z" /></svg></TaskButton>
            <TaskButton aria-label="Cortana"><svg width="16" height="16" viewBox="0 0 16 16"><circle cx="8" cy="8" r="6.500" fill="none" stroke="#fff" strokeWidth="2" /></svg></TaskButton>
            <TaskButton aria-label="Edge"><svg width="24" height="24" viewBox="0 0 24 24"><path d="M0 11C1 4 6 0 12 0c7 0 12 4 12 9 0 4-3 6-6 6s-5-1-4-4c0-3-8-5-14 0z" fill="#3cc888" /><path d="M0 11C1 4 6 0 12 0c4 0 7 1 9 4-7-3-15 0-21 7z" fill="#38b4e0" /><path d="M0 12c4-6 13-5 14-1-6 3-3 11 8 8-3 4-9 6-14 4-5-1-8-5-8-11z" fill="#1468b8" /><rect y="15" width="12" height="9" rx="1" fill="#d87c18" /><path d="M4 15v-2h4v2M0 19h12" fill="none" stroke="#8c4808" /></svg></TaskButton>
            <TaskButton aria-label="Store"><svg width="24" height="24" viewBox="0 0 24 24"><rect x="1" y="4" width="22" height="20" rx="2" fill="#f4f4f4" /><path d="M6 7V1h12v6" fill="none" stroke="#2c94c8" strokeWidth="2" /><path d="M7 10h4v4H7z" fill="#d85030" /><path d="M12 10h4v4h-4z" fill="#78a828" /><path d="M7 15h4v4H7z" fill="#2898c8" /><path d="M12 15h4v4h-4z" fill="#e8a818" /></svg></TaskButton>
            <TaskButton aria-label="Mail"><svg width="24" height="24" viewBox="0 0 24 24"><path d="M0 8l12-7 12 7v6H0z" fill="#185c98" /><path d="M2 8h20v8H2z" fill="#fff" /><path d="M0 8l12 8 12-8v15H0z" fill="#38a4e0" /><path d="M0 23l12-8 12-7v15z" fill="#2890d0" /></svg></TaskButton>
            <TaskButton aria-label="Paint"><svg width="24" height="24" viewBox="0 0 24 24"><path d="M12 4C5 4 0 9 1 13s5 3 6 5 2 5 7 4 8-6 8-10-4-8-10-8z" fill="#d8e4ec" /><circle cx="6" cy="10" r="2" fill="#48a848" /><circle cx="11" cy="7" r="2" fill="#d84848" /><circle cx="4" cy="14" r="1.500" fill="#4078d0" /><circle cx="9" cy="17" r="2.500" fill="#222" /><path d="M13 23l4-13 3 1z" fill="#c88840" /><path d="M16 10l2-8 6-1-4 10z" fill="#c4a070" /></svg></TaskButton>
            <TaskButton aria-label="File Explorer"><svg width="24" height="24" viewBox="0 0 24 24"><path d="M1 3h8l2 2h12v6H1z" fill="#d8a028" /><path d="M1 7h22v14H1z" fill="#fad468" /><path d="M5 13h14v8h-4v-4H9v4H5z" fill="#5890a8" /></svg></TaskButton>
            <TaskButton $active aria-label="Matrix"><svg width="24" height="24" viewBox="0 0 24 24"><circle cx="12" cy="12" r="12" fill="#38a8cc" /><path d="M2 8l3 9 3-9M9 16v1" fill="none" stroke="#d8f4fa" strokeWidth="1.200" /><circle cx="15" cy="5" r="3" fill="none" stroke="#d8f4fa" strokeWidth="1.200" /><circle cx="15.500" cy="13" r="5" fill="none" stroke="#d8f4fa" strokeWidth="1.200" /></svg></TaskButton>
          </TaskApps>
          <Tray>
            <TrayButton $width={62} $align="flex-start">Desktop<svg width="8" height="26" viewBox="0 0 8 26" fill="none" stroke="#fff" strokeWidth="1.300"><path d="M1 1l2.500 2.500L1 6M4.500 1L7 3.500 4.500 6" /></svg></TrayButton>
            <TrayButton $width={56} aria-label="People"><svg width="15" height="16" viewBox="0 0 15 16" fill="none" stroke="#eee" strokeWidth="1.200"><circle cx="10.500" cy="3" r="2.500" /><circle cx="5" cy="8" r="2.500" /><path d="M1 15c0-6 8-6 8 0M9 8c3-4 5 0 5 3" /></svg></TrayButton>
            <TrayButton $width={196} $align="flex-end"><svg width="24" height="17" viewBox="0 0 24 17" fill="none" stroke="#fff" strokeWidth="1.500"><path d="M1 1h19v15H2l-1-1zM20 4h3v11l-1 1h-4M4 5h13M4 8h6v5H4zM12 8h5M12 10.500h5M12 13h5" /></svg><Weather>28°C  Có nắng</Weather></TrayButton>
            <TrayButton $width={24} aria-label="Hidden icons"><svg width="12" height="7" viewBox="0 0 12 7" fill="none" stroke="#fff" strokeWidth="1.300"><path d="M1 6l5-5 5 5" /></svg></TrayButton>
            <TrayButton $width={24} aria-label="Network"><svg width="16" height="14" viewBox="0 0 16 14" fill="none" stroke="#fff" strokeWidth="1.200"><path d="M5 3h10v7H3V6M9 10v3M6 13h7M1 1h3v4H1zM2.500 5v3" /></svg></TrayButton>
            <TrayButton $width={24} aria-label="OneDrive"><svg width="17" height="14" viewBox="0 0 17 14"><path d="M3 10a3 3 0 0 1 0-6 5 5 0 0 1 9-1 4 4 0 0 1 3 7z" fill="#1c74c0" /><circle cx="12" cy="9.500" r="4" fill="#d8f0fa" /><path d="M10 9a2 2 0 0 1 4 0M14 10a2 2 0 0 1-4 0" fill="none" stroke="#1870b0" /></svg></TrayButton>
            <TrayButton $width={24} aria-label="Volume"><svg width="16" height="14" viewBox="0 0 16 14" fill="none" stroke="#fff" strokeWidth="1.200"><path d="M1 5h2l4-3.500v11L3 9H1zM9 5q1.500 2 0 4" /><path d="M11 3q3 4 0 8M13 1q4.500 6 0 12" stroke="#999" /></svg></TrayButton>
            <TrayButton $width={32} aria-label="Pen"><svg width="16" height="16" viewBox="0 0 16 16" fill="none" stroke="#fff" strokeWidth="1.200"><path d="M5 14l1-4 7-9 2 1.500-7 9zM6 7c-4 1-6 4-4 6s5-1 8-3 5 0 3 3" /></svg></TrayButton>
            <TrayButton $width={32} aria-label="Keyboard"><svg width="24" height="14" viewBox="0 0 24 14" fill="none" stroke="#fff" strokeWidth="1.200"><path d="M1 1h22v12H1zM6 10.500h12" /><path d="M3 4h18M3 7h18" strokeDasharray="1.500 1.500" /></svg></TrayButton>
            <Clock dateTime="2024-03-26T09:01">9:01 AM<br />3/26/2024</Clock>
            <TrayButton $width={42} aria-label="2 notifications"><svg width="25" height="25" viewBox="0 0 25 25"><path d="M1 2h16v12H8l-3 3v-3H1z" fill="#fff" /><path d="M4 5h10M4 8h10M4 11h6" stroke="#222" /><circle cx="16" cy="17" r="7.500" fill="#34343a" stroke="#888" /><text x="16" y="21" fill="#fff" fontSize="11" fontFamily="Open Sans, sans-serif" textAnchor="middle">2</text></svg></TrayButton>
          </Tray>
        </Taskbar>
      </Window>
    </>
  );
}
